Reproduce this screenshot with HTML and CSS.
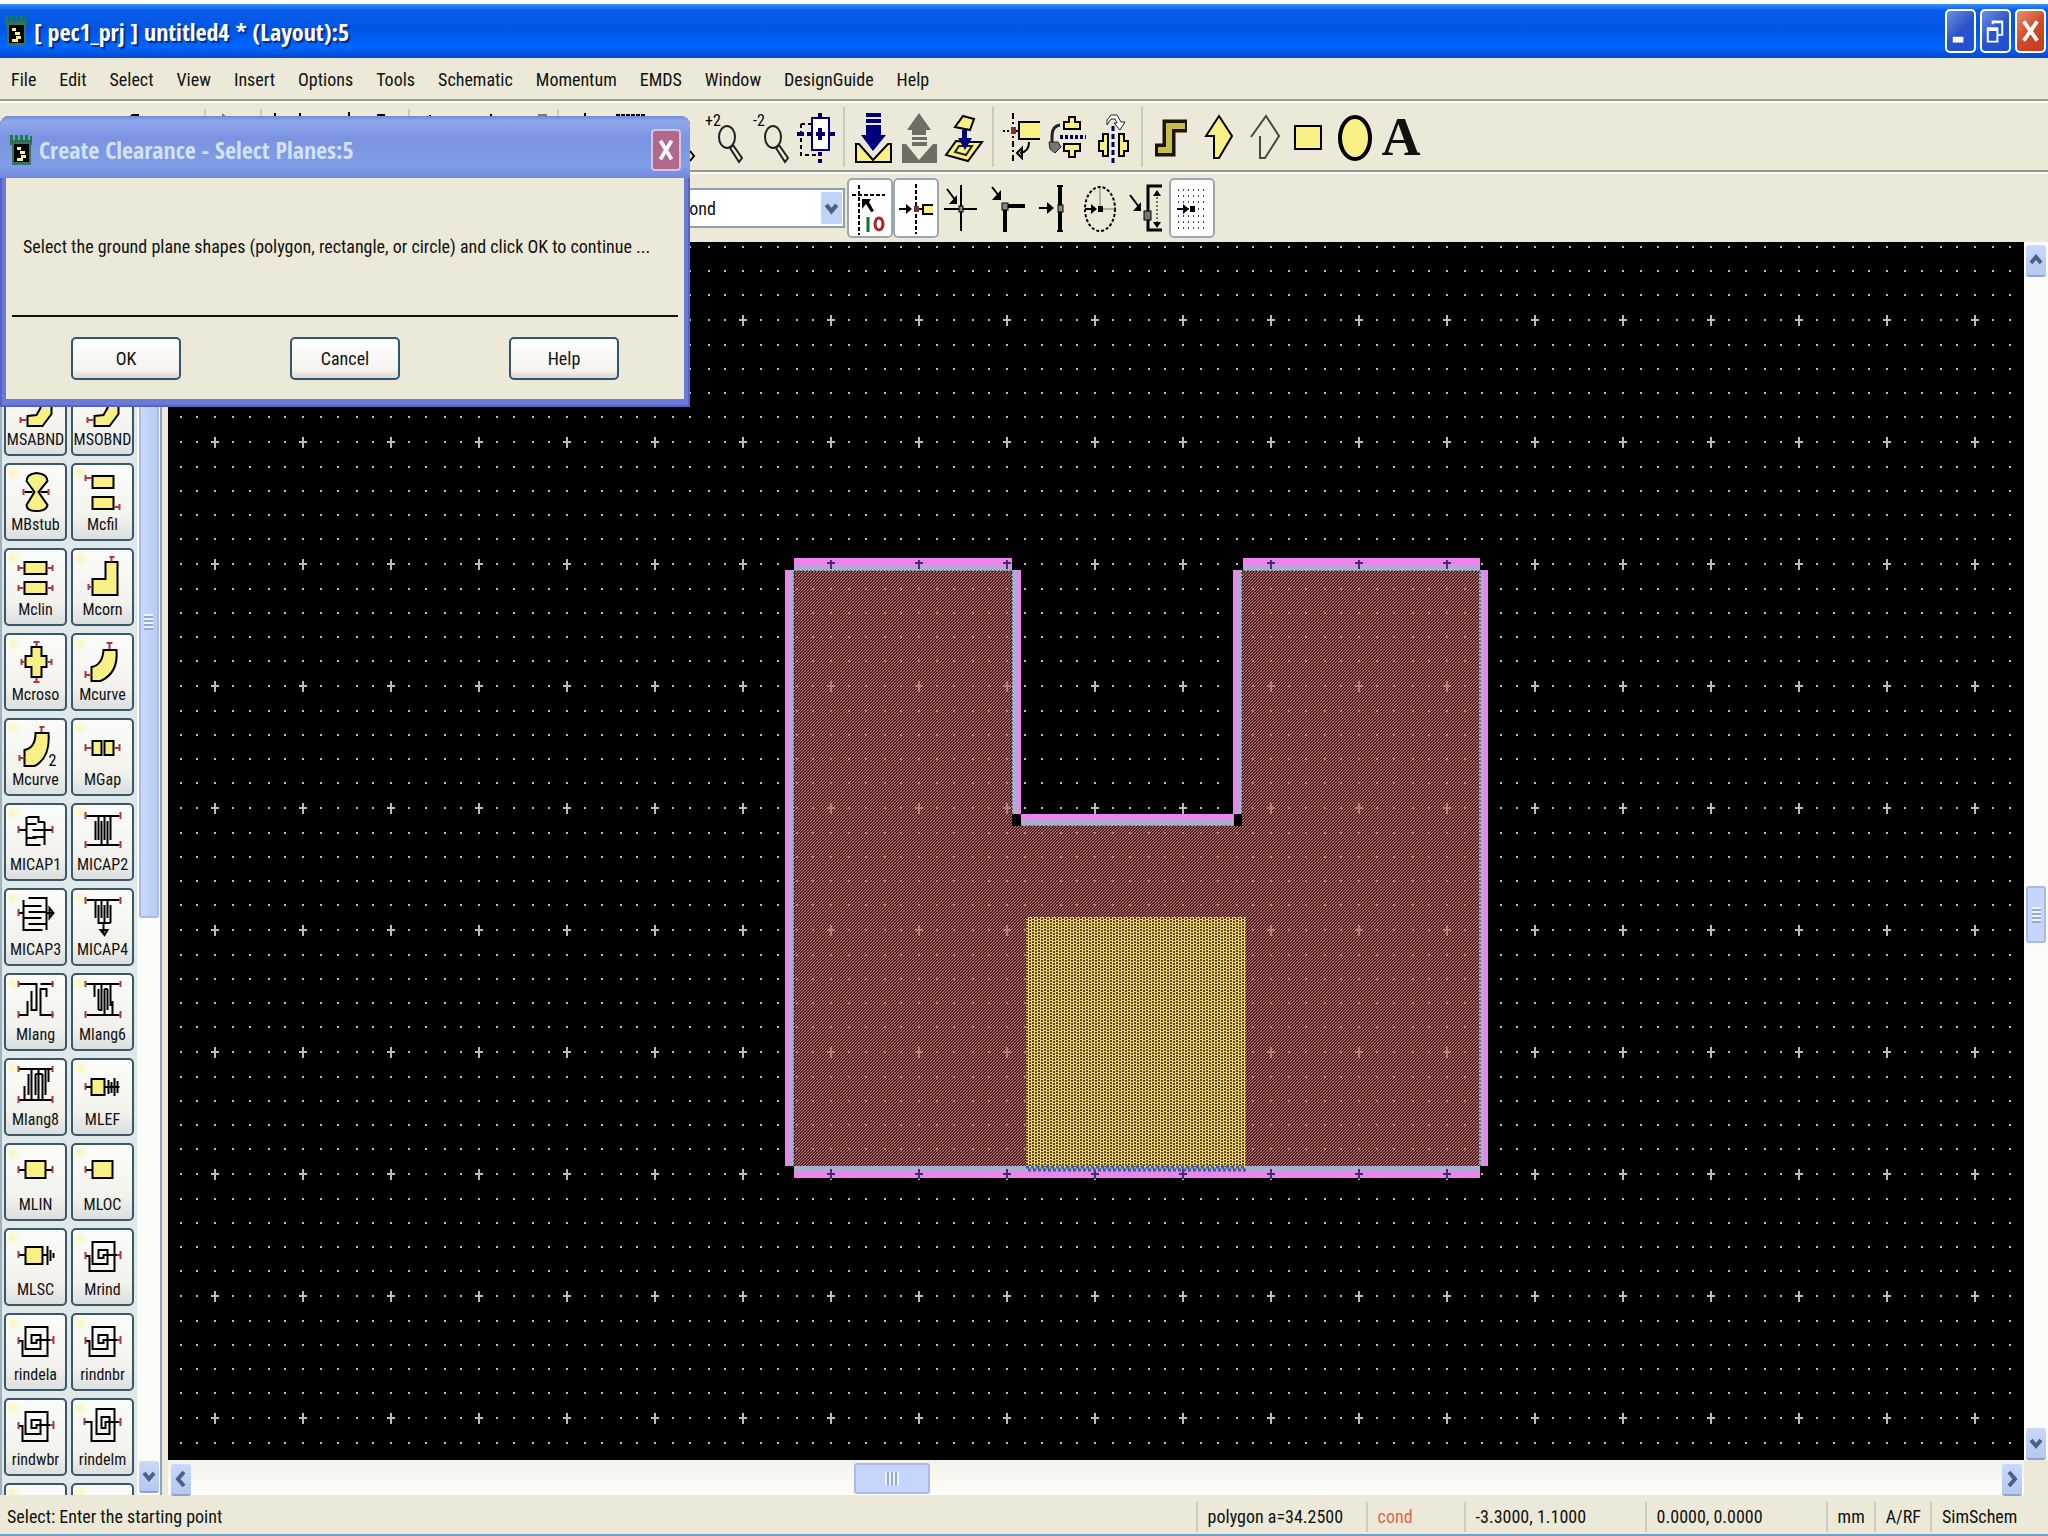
FILE: index.html
```
<!DOCTYPE html>
<html lang="en">
<head>
    <meta charset="UTF-8">
    <meta name="viewport" content="width=device-width, initial-scale=1.0">
    <title>[ pec1_prj ] untitled4 * (Layout):5</title>
    <link rel="stylesheet" href="styles.css">
</head>
<body>
    <svg class="defs" width="0" height="0" aria-hidden="true">
        <!-- application icon -->
        <symbol id="app" viewBox="0 0 24 32">
            <path d="M1 1h3v5h2v-5h3v5h2v-5h3v5h2v-5h3v5h2v-4h2v9h-22z" fill="#1f7a4a"/>
            <rect x="3" y="8" width="19" height="23" fill="#3f6f60"/>
            <rect x="5" y="10" width="15" height="18" fill="#000"/>
            <path d="M8 13h4v3h-4zM11 17h5v3h-5zM12 21h5v3h-5zM8 24h6v3h-6z" fill="#f8f088"/>
        </symbol>
        <symbol id="bend" viewBox="2 2 58 50">
            <path class="y" d="M23 38L32 37L36 30V22H47V36L38 48H23Z"/>
            <path class="pin" d="M16 42h6M16 39v6"/>
        </symbol>
        <symbol id="spiral" viewBox="2 2 58 50">
            <path class="k" d="M14 28H18V43H43V14H21V36H36V22H27V30H32V27H46"/>
            <path class="pin" d="M14 24v7M46 27h4M49 23v8"/>
        </symbol>
        <symbol id="down" viewBox="0 0 20 30"><path d="M5 12l5 6 5-6" fill="none" stroke="#4d6185" stroke-width="4"/></symbol>
        <symbol id="up" viewBox="0 0 20 30"><path d="M5 18l5-6 5 6" fill="none" stroke="#4d6185" stroke-width="4"/></symbol>
        <symbol id="left" viewBox="0 0 20 30"><path d="M13 8l-6 7 6 7" fill="none" stroke="#4d6185" stroke-width="4"/></symbol>
        <symbol id="right" viewBox="0 0 20 30"><path d="M7 8l6 7-6 7" fill="none" stroke="#4d6185" stroke-width="4"/></symbol>
    </svg>

    <header class="titlebar">
        <svg class="app-icon"><use href="#app"/></svg>
        <h1>[ pec1_prj ] untitled4 * (Layout):5</h1>
        <div class="window-buttons">
            <button aria-label="Minimize"><svg viewBox="0 0 28 40"><rect x="6" y="26" width="11" height="6" fill="#fff"/></svg></button>
            <button aria-label="Restore"><svg viewBox="0 0 28 40"><path d="M6 17h10v14h-10zM6 19h10M11 13v-3h10v14h-4M11 11h10" fill="none" stroke="#fff" stroke-width="2"/></svg></button>
            <button class="close" aria-label="Close"><svg viewBox="0 0 28 40"><path d="M7 10l14 20M21 10l-14 20" stroke="#fff" stroke-width="4"/></svg></button>
        </div>
    </header>

    <nav class="menubar">
        <a href="#">File</a>
        <a href="#">Edit</a>
        <a href="#">Select</a>
        <a href="#">View</a>
        <a href="#">Insert</a>
        <a href="#">Options</a>
        <a href="#">Tools</a>
        <a href="#">Schematic</a>
        <a href="#">Momentum</a>
        <a href="#">EMDS</a>
        <a href="#">Window</a>
        <a href="#">DesignGuide</a>
        <a href="#">Help</a>
    </nav>

    <div class="toolbar toolbar-main">
        <!-- tools that sit behind the dialog -->
        <svg class="hidden-tools" viewBox="0 0 701 68">
            <path d="M129 14l3-3h7v3z"/>
            <path d="M222 10l5 4h-5zM538 11h9v3h-9z" fill="#777"/>
            <path d="M205 6v8M261 6v8M409 6v8M558 6v8" stroke="#aca899"/>
            <path d="M275 10v4M300 10v4M349 9v5M377 12h8M430 12v2M491 11v3M585 10v4" stroke="#000" stroke-width="2"/>
            <path d="M616 12h30" stroke="#000" stroke-width="2" stroke-dasharray="4 1"/>
            <path d="M690 48l4 5-4 5" fill="none" stroke="#000" stroke-width="2"/>
        </svg>
        <div class="group">
            <button aria-label="Zoom in by 2"><svg viewBox="0 0 46 60"><text x="4" y="19" class="tiny">+2</text><ellipse cx="26" cy="30" rx="8" ry="11" class="thin"/><path class="thin" d="M29 41l9 14 3-4-9-13z"/></svg></button>
            <button aria-label="Zoom out by 2"><svg viewBox="0 0 46 60"><text x="6" y="19" class="tiny">-2</text><ellipse cx="26" cy="30" rx="8" ry="11" class="thin"/><path class="thin" d="M29 41l9 14 3-4-9-13z"/></svg></button>
            <button aria-label="Center view"><svg viewBox="0 0 46 60"><path d="M8 17h10M8 17v31h18" fill="none" stroke="#000" stroke-width="2" stroke-dasharray="4 3"/><rect x="19" y="11" width="17" height="32" fill="#fff" stroke="#000080" stroke-width="2"/><path d="M27 6v5M27 45v4M27 52v4M4 27h7M14 27h5M37 27h5M23 27h9M27 21v12" stroke="#000060" stroke-width="4"/></svg></button>
        </div>
        <div class="group">
            <button aria-label="Push into hierarchy"><svg viewBox="0 0 46 60"><path class="y" d="M6 37v18h35V37h-3L23 53 9 37z"/><path d="M16 6h15v4H16zM16 12h15v4H16zM16 18h15v10h5L23 44 11 28h5z" fill="#00007c"/></svg></button>
            <button aria-label="Pop out of hierarchy"><svg viewBox="0 0 46 60"><path d="M6 37h4l13 16 14-16h4v19H6zM23 6l12 17h-5v5H16v-5h-5zM16 30h15v3H16zM16 35h15v4H16z" fill="#706e64"/></svg></button>
            <button aria-label="Layers"><svg viewBox="0 0 46 60"><path class="y" d="M14 34L24 35L40 35L26 54L4 48Z"/><path class="y" d="M21 9L32 12L28 23L13 20Z"/><path class="thin" d="M17 39h13l-6 9-11-3z"/><path d="M20 23h5v8h5l-7 12-7-12h4z" fill="#00007c"/></svg></button>
        </div>
        <div class="group">
            <button aria-label="Insert relative"><svg viewBox="0 0 46 60"><path d="M14 6v50" stroke="#000" stroke-width="2" stroke-dasharray="6 3 2 3"/><path d="M4 24h8" stroke="#000" stroke-width="2" stroke-dasharray="2 2"/><path class="y" d="M41 15H20v17h21"/><rect x="12" y="20" width="5" height="7" fill="#803030"/><path d="M17 24h3M30 35q0 10-9 11M23 41l-5 5 5 5z" stroke="#000" stroke-width="2" fill="none"/></svg></button>
            <button aria-label="Mirror vertical"><svg viewBox="0 0 46 60"><path class="y" d="M19 22v-7h5v-5h6v5h5v7zM19 37v7h5v6h6v-6h5v-7z"/><path d="M15 30h26" stroke="#000060" stroke-width="4" stroke-dasharray="3 2"/><path d="M15 18q-8 1-8 11v7" fill="none" stroke="#222" stroke-width="3"/><path d="M4 35h9l3 5-6 6-5-4z" fill="#777" stroke="#222"/></svg></button>
            <button aria-label="Mirror horizontal"><svg viewBox="0 0 46 60"><path class="y" d="M17 27h-5v7H8v10h4v5h5zM28 27h5v7h4v10h-4v5h-5z"/><path d="M22 19v37" stroke="#000060" stroke-width="3" stroke-dasharray="5 3"/><path d="M16 18v-5l4-5h6l4 7h4l-5 8-6-7h3l-2-4h-4z" fill="#fff" stroke="#222"/></svg></button>
        </div>
        <div class="group">
            <button aria-label="Path"><svg viewBox="0 0 46 60"><path d="M7 43h14V19h18" fill="none" stroke="#1c1400" stroke-width="13"/><path d="M10 43h11V19h16" fill="none" stroke="#c8bc48" stroke-width="6"/></svg></button>
            <button aria-label="Polygon"><svg viewBox="0 0 46 60"><path class="y" d="M25 9l13 20-13 22h-5V29h-8z"/></svg></button>
            <button aria-label="Polyline"><svg viewBox="0 0 46 60"><path d="M11 30L26 9l13 20-14 22h-5V29" fill="none" stroke="#4a4836" stroke-width="2"/></svg></button>
            <button aria-label="Rectangle"><svg viewBox="0 0 46 60"><rect class="y" x="9" y="19" width="26" height="23"/></svg></button>
            <button aria-label="Circle"><svg viewBox="0 0 46 60"><ellipse class="y" cx="23" cy="31" rx="15" ry="21"/></svg></button>
            <button class="text-tool" aria-label="Text">A</button>
        </div>
    </div>

    <div class="toolbar toolbar-layer">
        <label class="layer-select">
            <select aria-label="Layer"><option>cond</option></select>
            <svg><use href="#down"/></svg>
        </label>
        <div class="snaps">
            <button class="on" aria-label="Snap toggle"><svg viewBox="0 0 46 60"><path d="M12 7v50M5 17h33" stroke="#000" stroke-width="2" stroke-dasharray="4 2"/><path d="M15 21h9l-2 3 5 9-3 1-5-8-4 5z"/><path d="M21 39v15" stroke="#107030" stroke-width="3"/><ellipse cx="32" cy="46" rx="4" ry="6" fill="none" stroke="#b02020" stroke-width="3"/></svg></button>
            <button class="on" aria-label="Pin snap"><svg viewBox="0 0 46 60"><path d="M23 6v50" stroke="#000" stroke-width="2" stroke-dasharray="4 2"/><path d="M6 31h12M26 31h4" stroke="#000" stroke-width="2"/><path d="M13 26l6 5-6 5z"/><path class="y" d="M40 27H30v9h10"/><rect x="21" y="28" width="5" height="6" fill="#803030"/></svg></button>
            <button aria-label="Vertex snap"><svg viewBox="0 0 46 60"><path d="M22 7v46M5 31h33M8 11l9 12" stroke="#000" stroke-width="2"/><path d="M18 17v9h-8z"/><rect x="20" y="28" width="4" height="6" fill="#888" stroke="#000"/></svg></button>
            <button aria-label="Midpoint snap"><svg viewBox="0 0 46 60"><path d="M7 9l7 9" stroke="#000" stroke-width="2"/><path d="M16 12v10H7z"/><path d="M20 54V28h20" fill="none" stroke="#000" stroke-width="4"/><rect x="17" y="25" width="6" height="7" fill="#888" stroke="#000"/></svg></button>
            <button aria-label="Edge snap"><svg viewBox="0 0 46 60"><path d="M8 30h12" stroke="#000" stroke-width="2"/><path d="M16 24l7 6-7 6z"/><path d="M29 8v46" stroke="#000" stroke-width="4"/><path d="M26 8h6M26 53h6" stroke="#000" stroke-width="2"/><rect x="27" y="27" width="5" height="7" fill="#888" stroke="#000"/></svg></button>
            <button aria-label="Arc center snap"><svg viewBox="0 0 46 60"><ellipse cx="23" cy="31" rx="15" ry="22" fill="none" stroke="#000" stroke-width="2" stroke-dasharray="3 2"/><path d="M23 31V10M23 31h15" stroke="#777"/><path d="M8 31h8" stroke="#000" stroke-width="2"/><path d="M14 26l6 5-6 5zM21 28h5v6h-5z"/></svg></button>
            <button aria-label="Intersect snap"><svg viewBox="0 0 46 60"><path d="M7 17l9 12" stroke="#000" stroke-width="2"/><path d="M18 24v9h-8z"/><path d="M39 8H25v44h14" fill="none" stroke="#000" stroke-width="3"/><rect x="21" y="33" width="7" height="9" fill="#777" stroke="#000"/><path d="M34 15v33" stroke="#000" stroke-dasharray="2 2"/><path d="M30 18l4-6 4 6zM30 44l4 6 4-6z"/></svg></button>
            <button class="on" aria-label="Grid snap"><svg viewBox="0 0 46 60"><path d="M9 12h30M9 18h30M9 24h30M9 31h30M9 38h30M9 44h30M9 50h30" stroke="#444" stroke-width="2" stroke-dasharray="1 4"/><path d="M8 31h8" stroke="#000" stroke-width="2"/><path d="M14 26l6 5-6 5zM21 28h5v6h-5z"/></svg></button>
        </div>
    </div>

    <main class="workspace">
        <aside class="palette">
            <div class="parts">
                <button><svg><use href="#bend"/></svg>MSABND</button>
                <button><svg><use href="#bend"/></svg>MSOBND</button>
                <button><svg viewBox="2 2 58 50"><path class="y" d="M30 29L22 18Q22 11 32 10Q43 11 43 18L34 29L43 42Q42 48 32 48Q22 48 22 42Z"/><path class="k" d="M20 29h8M36 29h8"/><path class="pin" d="M19 26v6M44 26v6"/></svg>MBstub</button>
                <button><svg viewBox="2 2 58 50"><path class="y" d="M21 13h21v12h-21zM21 34h21v12h-21z"/><path class="pin" d="M14 12v6M14 15h6M43 44h6M48 41v6"/></svg>Mcfil</button>
                <button><svg viewBox="2 2 58 50"><path class="y" d="M20 14h22v12h-22zM20 34h22v12h-22z"/><path class="pin" d="M14 20h5M14 17v6M43 20h6M48 17v6M14 40h5M14 37v6M43 40h6M48 37v6"/></svg>Mclin</button>
                <button><svg viewBox="2 2 58 50"><path class="y" d="M21 31h13v-17h12v33h-25z"/><path class="pin" d="M17 39h4M17 36v6M40 14v-5M38 9h5"/></svg>Mcorn</button>
                <button><svg viewBox="2 2 58 50"><path class="y" d="M21 23h6v-9h10v9h5v11h-5v10h-10v-10h-6z"/><path class="pin" d="M17 29h4M17 26v6M43 29h4M47 26v6M32 13v-4M29 9h6M32 45v5M29 49h6"/></svg>Mcroso</button>
                <button><svg viewBox="2 2 58 50"><path class="y" d="M32 17H45Q47 40 29 48H20V34Q31 32 32 17Z"/><path class="pin" d="M14 42h6M14 38v7M38 16v-6M35 10h6"/></svg>Mcurve</button>
                <button><svg viewBox="2 2 58 50"><path class="y" d="M31 15H44Q46 40 30 48H20V32Q31 30 31 15Z"/><path class="pin" d="M15 40h5M15 37v6M37 14v-5M35 9h5"/><text x="44" y="48" class="tiny">2</text></svg>Mcurve</button>
                <button><svg viewBox="2 2 58 50"><path class="y" d="M21 23h9v14h-9zM33 23h9v14h-9z"/><path class="pin" d="M14 30h6M14 26v7M43 30h6M48 26v7"/></svg>MGap</button>
                <button><svg viewBox="2 2 58 50"><path class="k" d="M14 27H22M40 27H48M23 14H34V19H40M22 14V42H36M40 19V42M22 21H32M22 35H32M28 27H40M28 34H40"/><path class="pin" d="M14 23v7M48 23v7"/></svg>MICAP1</button>
                <button><svg viewBox="2 2 58 50"><path class="k" d="M15 13H48M15 42H48M24 18V37M27 13V37M30 18V42M33 13V37M36 18V42M39 13V37"/><path class="pin" d="M14 9v7M49 9v7M14 38v7M49 38v7"/></svg>MICAP2</button>
                <button><svg viewBox="2 2 58 50"><path class="k" d="M14 25H19M19 12V42H38M24 10H42V42M19 18H37M24 24H42M19 30H37M24 36H42M42 25h3l3 0M45 20v10l4-5z"/><path class="pin" d="M14 21v7"/></svg>MICAP3</button>
                <button><svg viewBox="2 2 58 50"><path class="k" d="M15 12H48M24 12V30M27 17V35M30 12V30M33 17V35M36 12V30M39 17V35M26 35H39M32 35V46M29 42h7l-3 5z"/><path class="pin" d="M14 9v7M49 9v7"/></svg>MICAP4</button>
                <button><svg viewBox="2 2 58 50"><path class="k" d="M14 11H32V37H27V18M14 42H23V28M49 42H36V16H42V24M36 11H49"/><path class="pin" d="M14 8v6M48 8v6M14 38v7M48 38v7"/></svg>Mlang</button>
                <button><svg viewBox="2 2 58 50"><path class="k" d="M15 11H48M15 42H48M23 11V24M27 16V37M30 11V37H27M33 16V42M36 16V37M39 11V33M33 16H36M41 42V28"/><path class="pin" d="M14 8v6M49 8v6M14 38v7M49 38v7"/></svg>Mlang6</button>
                <button><svg viewBox="2 2 58 50"><path class="k" d="M14 11H48M14 42H48M20 42V28M24 16V37M27 11V42M31 16V37M34 11V42M38 16V42M41 11V37M44 11V24M31 16H38"/><path class="pin" d="M14 8v6M48 8v6M14 38v7M48 38v7"/></svg>Mlang8</button>
                <button><svg viewBox="2 2 58 50"><path class="y" d="M20 21h13v16h-13z"/><path class="k" d="M14 29H20M33 29H48M37 22v14M40 24v11M43 20v18M46 23v12"/><path class="pin" d="M14 25v7"/></svg>MLEF</button>
                <button><svg viewBox="2 2 58 50"><path class="y" d="M21 18h20v17h-20z"/><path class="k" d="M14 27H21M41 27H48"/><path class="pin" d="M14 23v7M48 23v7"/></svg>MLIN</button>
                <button><svg viewBox="2 2 58 50"><path class="y" d="M21 18h20v17h-20z"/><path class="k" d="M14 27H21"/><path class="pin" d="M14 23v7"/></svg>MLOC</button>
                <button><svg viewBox="2 2 58 50"><path class="y" d="M21 19h17v17h-17z"/><path class="k" d="M14 27H21M38 27H43M43 18v19M46 22v11M49 25v5"/><path class="pin" d="M14 23v7"/></svg>MLSC</button>
                <button><svg><use href="#spiral"/></svg>Mrind</button>
                <button><svg><use href="#spiral"/></svg>rindela</button>
                <button><svg><use href="#spiral"/></svg>rindnbr</button>
                <button><svg><use href="#spiral"/></svg>rindwbr</button>
                <button><svg viewBox="2 2 58 50"><path class="k" d="M13 24H20V43H43V11H25V36H38V19H30V30H34V24H48"/><path class="pin" d="M13 20v7M49 20v8"/></svg>rindelm</button>
                <button aria-label="More parts"></button>
                <button aria-label="More parts"></button>
            </div>
            <div class="scroll palette-scroll">
                <div class="thumb vertical"></div>
                <button class="arrow" aria-label="Scroll down"><svg><use href="#down"/></svg></button>
            </div>
        </aside>

        <section class="view">
            <svg class="canvas">
                <defs>
                    <path id="row" d="M12 4h2v2h-2zM28 4h2v2h-2zM46 4h2v2h-2zM64 4h2v2h-2zM81 4h2v2h-2z"/>
                    <g id="cell">
                        <use href="#row"/>
                        <use href="#row" y="24"/>
                        <use href="#row" y="48"/>
                        <use href="#row" y="73"/>
                        <use href="#row" y="98"/>
                        <path d="M46 73h2v11h-2zM43 77h8v2h-8z"/>
                    </g>
                    <pattern id="grid" width="88" height="122" patternUnits="userSpaceOnUse">
                        <use href="#cell" fill="#bcbcbc"/>
                    </pattern>
                    <pattern id="planeGrid" width="88" height="122" patternUnits="userSpaceOnUse">
                        <use href="#cell" fill="#e8a8a0" opacity="0.6"/>
                    </pattern>
                    <pattern id="cond" width="3" height="3" patternUnits="userSpaceOnUse">
                        <rect width="3" height="3" fill="#481c1e"/>
                        <path d="M0 0h1v1h-1zM2 1h1v1h-1zM1 2h1v1h-1z" fill="#bc7874"/>
                        <path d="M1 0h1v1h-1zM0 2h1v1h-1z" fill="#703838"/>
                    </pattern>
                    <pattern id="feed" width="6" height="6" patternUnits="userSpaceOnUse">
                        <rect width="6" height="6" fill="#ecd46c"/>
                        <path d="M0 0h2v2h-2zM3 1h2v2h-2zM0 3h2v2h-2zM3 4h2v2h-2z" fill="#5c4424"/>
                    </pattern>
                </defs>
                <rect width="1846" height="1204" fill="url(#grid)"/>
                <!-- ground plane with its selection outline -->
                <path d="M626 328H844V584H1074V328H1312V924H626Z" fill="url(#cond)"/>
                <path d="M626 328H844V584H1074V328H1312V924H626Z" fill="url(#planeGrid)"/>
                <path fill="#ee82ee" d="M626 316h218v7h-218zM1075 316h237v7h-237zM617 328h4v596h-4zM1315 328h5v596h-5zM626 930h686v6h-686zM849 328h4v244h-4zM1065 328h4v244h-4zM853 572h213v6h-213z"/>
                <path fill="#adadd0" d="M626 323h218v6h-218zM1075 323h237v6h-237zM621 328h5v596h-5zM1311 328h5v596h-5zM626 924h686v6h-686zM844 328h5v244h-5zM1069 328h5v244h-5zM853 578h213v6h-213z"/>
                <path d="M844 330v244M1074 330v244M626 330v594M1312 330v594M626 329h218M1075 329h237M853 584h213" fill="none" stroke="#303040" stroke-dasharray="2 2"/>
                <path d="M663 318v9M659 321h8M751 318v9M747 321h8M839 318v9M835 321h8M1103 318v9M1099 321h8M1191 318v9M1187 321h8M1279 318v9M1275 321h8M663 927v10M659 932h8M751 927v10M747 932h8M839 927v10M835 932h8M927 927v10M923 932h8M1015 927v10M1011 932h8M1103 927v10M1099 932h8M1191 927v10M1187 932h8M1279 927v10M1275 932h8" stroke="#40306a" stroke-width="2"/>
                <!-- feed -->
                <rect x="858" y="675" width="220" height="250" fill="url(#feed)"/>
                <path d="M858 925h220M860 928h218" stroke="#3f5f9c" stroke-width="3" stroke-dasharray="3 2"/>
            </svg>
            <div class="scroll canvas-scroll-y">
                <button class="arrow" aria-label="Scroll up"><svg><use href="#up"/></svg></button>
                <div class="space before"></div>
                <div class="thumb vertical"></div>
                <div class="space after"></div>
                <button class="arrow" aria-label="Scroll down"><svg><use href="#down"/></svg></button>
            </div>
            <div class="scroll canvas-scroll-x">
                <button class="arrow" aria-label="Scroll left"><svg><use href="#left"/></svg></button>
                <div class="space before"></div>
                <div class="thumb horizontal"></div>
                <div class="space after"></div>
                <button class="arrow" aria-label="Scroll right"><svg><use href="#right"/></svg></button>
            </div>
        </section>
    </main>

    <footer class="statusbar">
        <span class="message">Select: Enter the starting point</span>
        <span class="cell wide">polygon a=34.2500</span>
        <span class="cell layer">cond</span>
        <span class="cell coords">-3.3000, 1.1000</span>
        <span class="cell coords">0.0000, 0.0000</span>
        <span class="cell">mm</span>
        <span class="cell">A/RF</span>
        <span class="cell last">SimSchem</span>
    </footer>

    <div class="dialog" role="dialog" aria-labelledby="dialogTitle">
        <div class="dialog-title">
            <svg class="app-icon"><use href="#app"/></svg>
            <h2 id="dialogTitle">Create Clearance - Select Planes:5</h2>
            <button class="dialog-close" aria-label="Close"><svg viewBox="0 0 28 40"><path d="M8 10l12 20M20 10l-12 20" stroke="#fff" stroke-width="4"/></svg></button>
        </div>
        <div class="dialog-body">
            <p>Select the ground plane shapes (polygon, rectangle, or circle) and click OK to continue ...</p>
            <div class="dialog-buttons">
                <button>OK</button>
                <button>Cancel</button>
                <button>Help</button>
            </div>
        </div>
    </div>
</body>
</html>
```
FILE: styles.css
```
* {
    margin: 0;
    padding: 0;
    box-sizing: border-box;
}

body {
    font-family: "Roboto Condensed", "DejaVu Sans Condensed", sans-serif;
    font-size: 18px;
    color: #111;
    background: #ece9d8;
    height: 100vh;
    overflow: hidden;
    display: flex;
    flex-direction: column;
}

button,
select {
    font: inherit;
    color: inherit;
    border: none;
    background: none;
}

a {
    color: inherit;
    text-decoration: none;
}

.defs {
    position: absolute;
}

.y {
    fill: #f8f084;
    stroke: #000;
    stroke-width: 2;
}

ellipse.y {
    stroke-width: 4;
}

.k {
    fill: none;
    stroke: #000;
    stroke-width: 2;
}

.pin {
    fill: none;
    stroke: #a83a44;
    stroke-width: 2;
}

.thin {
    fill: none;
    stroke: #222;
    stroke-width: 2;
}

.tiny {
    font-size: 16px;
}

.app-icon {
    width: 24px;
    height: 32px;
}

/* title bar */
.titlebar {
    display: flex;
    align-items: center;
    gap: 6px;
    height: 58px;
    padding: 0 2px 0 4px;
    border-top: 4px solid #fff;
    background: linear-gradient(#3a93ff 0, #0a5ce6 12%, #0055e5 45%, #0266ff 80%, #0148c8 100%);
}

.titlebar h1 {
    flex: 1;
    font-family: "Open Sans Condensed", "Roboto Condensed", sans-serif;
    font-size: 24px;
    font-weight: 700;
    color: #fff;
    text-shadow: 2px 2px 1px #0a2a80;
}

.window-buttons {
    display: flex;
    gap: 4px;
}

.window-buttons button {
    width: 31px;
    height: 44px;
    border: 2px solid #fff;
    border-radius: 5px;
    background: linear-gradient(135deg, #6f8fe0, #2a55c8 50%, #1b4fd8);
}

.window-buttons svg {
    display: block;
    width: 27px;
    height: 40px;
}

.window-buttons .close {
    background: linear-gradient(135deg, #e89070, #d04a28 50%, #c03c20);
}

/* menu */
.menubar {
    display: flex;
    align-items: center;
    gap: 23px;
    height: 43px;
    padding: 2px 11px 0;
    border-bottom: 2px solid #99978c;
}

/* toolbars */
.toolbar {
    display: flex;
    align-items: center;
    border-top: 2px solid #fff;
}

.toolbar-main {
    height: 71px;
    border-bottom: 2px solid #99978c;
}

.hidden-tools {
    width: 701px;
    height: 68px;
    flex: none;
}

.group {
    display: flex;
}

.group + .group {
    margin-left: 4px;
    padding-left: 5px;
    border-left: 2px solid #cdcabb;
}

.toolbar button {
    width: 46px;
    height: 60px;
    flex: none;
}

.toolbar svg {
    display: block;
}

.group svg {
    width: 46px;
    height: 60px;
}

.text-tool {
    font-family: "Liberation Serif", serif;
    font-size: 54px;
    font-weight: 700;
    line-height: 60px;
}

.toolbar-layer {
    height: 70px;
    padding-left: 660px;
}

.layer-select {
    display: flex;
    align-items: center;
    width: 185px;
    height: 40px;
    border: 2px solid #8aa0ac;
    background: #fff;
}

.layer-select select {
    flex: 1;
    height: 36px;
    padding-left: 19px;
    appearance: none;
}

.layer-select svg {
    width: 21px;
    height: 32px;
    margin-right: 1px;
    background: #c2d3f8;
    border-radius: 2px;
}

.snaps {
    display: flex;
    margin-left: 2px;
}

.snaps svg {
    width: 100%;
    height: 60px;
}

.snaps .on {
    background: #fff;
    border-radius: 5px;
    box-shadow: inset 0 0 0 2px #9aa8b0;
}

/* workspace */
.workspace {
    flex: 1;
    min-height: 0;
    display: flex;
}

.palette {
    display: flex;
    width: 162px;
    margin-right: 6px;
    border-left: 2px solid #9db4c0;
    border-right: 2px solid #8fa3ba;
    background: #dfe9ea;
    overflow: hidden;
}

.parts {
    display: grid;
    grid-template-columns: 63px 63px;
    grid-auto-rows: 78px;
    gap: 7px 4px;
    padding: 136px 3px 0 2px;
}

.parts button {
    display: flex;
    flex-direction: column;
    align-items: center;
    border: 2px solid #3c5866;
    border-radius: 5px;
    background: radial-gradient(circle at 7px 8px, #f8f6b8, transparent 8px), linear-gradient(#fbfcfa, #f3f2ec 70%, #dcdfe0);
    font-size: 16px;
    line-height: 20px;
}

.parts svg {
    width: 59px;
    height: 50px;
    flex: none;
}

.scroll {
    display: flex;
    background: #fbfbf8;
}

.arrow {
    flex: none;
    width: 20px;
    height: 30px;
    border-radius: 3px;
    background: linear-gradient(#c9d8fb, #b4c8f4);
    box-shadow: 0 2px 0 #8fa4c4;
}

.arrow svg {
    display: block;
    width: 20px;
    height: 30px;
}

.thumb {
    flex: none;
    border: 2px solid #a9bce8;
    border-radius: 3px;
    background: #c6d5fc;
    display: grid;
    place-items: center;
}

.thumb::before {
    content: "";
}

.thumb.vertical {
    width: 20px;
    height: 57px;
}

.thumb.vertical::before {
    width: 9px;
    height: 16px;
    background: repeating-linear-gradient(#eef3ff 0 2px, #93a9dc 2px 4px);
}

.thumb.horizontal {
    width: 76px;
    height: 31px;
}

.thumb.horizontal::before {
    width: 14px;
    height: 13px;
    background: repeating-linear-gradient(90deg, #eef3ff 0 2px, #93a9dc 2px 4px);
}

.palette-scroll {
    flex: 1;
    flex-direction: column;
    justify-content: space-between;
    align-items: center;
    padding-bottom: 4px;
}

.palette-scroll .thumb {
    height: 676px;
    background: linear-gradient(90deg, #c9d9ff, #b9caf4);
}

.palette-scroll .thumb::before {
    margin-top: 84px;
}

.view {
    flex: 1;
    min-width: 0;
    display: grid;
    grid-template-columns: 1fr 24px;
    grid-template-rows: 1fr 35px;
}

.canvas {
    width: 100%;
    height: 100%;
    background: #000;
}

.canvas-scroll-y {
    flex-direction: column;
    align-items: center;
    padding: 3px 0 2px;
}

.canvas-scroll-x {
    align-items: center;
    padding: 2px 2px 0 3px;
    background: linear-gradient(#f2f1ea, #fdfdfb);
}

.canvas-scroll-y .before {
    flex: 612;
}

.canvas-scroll-y .after {
    flex: 485;
}

.canvas-scroll-x .before {
    flex: 661;
}

.canvas-scroll-x .after {
    flex: 1070;
}

/* status bar */
.statusbar {
    display: flex;
    align-items: center;
    height: 41px;
    padding: 4px 0 0 7px;
    border-bottom: 2px solid #6fa0c8;
}

.message {
    flex: 1;
}

.cell {
    padding: 0 9px 0 10px;
    border-left: 2px solid #cfccbd;
    line-height: 30px;
}

.cell.wide {
    width: 170px;
}

.cell.layer {
    width: 98px;
    color: #d9694a;
}

.cell.coords {
    width: 181px;
}

.cell.last {
    width: 118px;
}

/* dialog */
.dialog {
    position: absolute;
    left: 0;
    top: 116px;
    width: 690px;
    padding: 0 6px 8px;
    border-radius: 9px 9px 0 0;
    background: #6b7ad8;
    box-shadow: inset 2px 0 0 #5563c4, inset -2px -2px 0 #5563c4;
}

.dialog-title {
    display: flex;
    align-items: center;
    gap: 6px;
    height: 62px;
    margin: 0 -6px;
    padding: 5px 9px 0;
    border-radius: 9px 9px 0 0;
    background: linear-gradient(#6f87d4 0, #8fa8ee 8%, #7b93e0 35%, #7f9fe8 80%, #7388dc 100%);
}

.dialog-title h2 {
    flex: 1;
    font-family: "Open Sans Condensed", "Roboto Condensed", sans-serif;
    font-size: 24px;
    font-weight: 700;
    color: #d3e2fb;
}

.dialog-close {
    width: 30px;
    height: 42px;
    border: 2px solid #d8c4e4;
    border-radius: 4px;
    background: #b0688c;
}

.dialog-close svg {
    display: block;
    width: 26px;
    height: 38px;
}

.dialog-body {
    background: #ece9d8;
    padding: 0 6px;
    height: 221px;
}

.dialog-body p {
    height: 139px;
    padding: 0 11px;
    line-height: 138px;
    border-bottom: 2px solid #111;
    white-space: nowrap;
}

.dialog-buttons {
    display: flex;
    justify-content: space-between;
    padding: 20px 59px;
}

.dialog-buttons button {
    width: 110px;
    height: 43px;
    border: 2px solid #2f5674;
    border-radius: 5px;
    background: linear-gradient(#fff, #f4f3ee 80%, #dcd8cc);
}
```
